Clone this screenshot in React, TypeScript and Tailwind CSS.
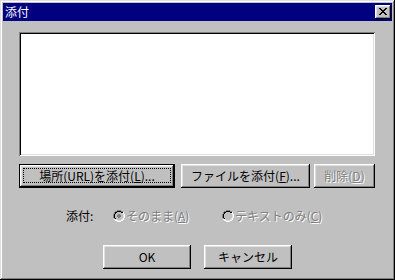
import React from 'react';

const FONT = '"Noto Sans CJK JP", "Noto Sans", sans-serif';

const COLORS: Record<string, string> = {
  G: '#808080',
  K: '#000000',
  L: '#dfdfdf',
  W: '#ffffff',
  F: '#c0c0c0',
  D: '#808080',
};

function Pixels({ rows, className }: { rows: string[]; className?: string }) {
  return (
    <svg
      width={rows[0].length}
      height={rows.length}
      viewBox={`0 0 ${rows[0].length} ${rows.length}`}
      shapeRendering="crispEdges"
      className={className}
    >
      {rows.flatMap((row, y) =>
        row.split('').map((c, x) =>
          COLORS[c] ? <rect key={`${x}-${y}`} x={x} y={y} width={1} height={1} fill={COLORS[c]} /> : null,
        ),
      )}
    </svg>
  );
}

const RADIO_OFF = [
  '....GGGG....',
  '..GGKKKKGG..',
  '.GKKFFFFKKW.',
  '.GKFFFFFFLW.',
  'GKFFFFFFFFLW',
  'GKFFFFFFFFLW',
  'GKFFFFFFFFLW',
  'GKFFFFFFFFLW',
  '.GKFFFFFFLW.',
  '.WLLFFFFLLW.',
  '..WWLLLLWW..',
  '....WWWW....',
];

const RADIO_ON = [
  '....GGGG....',
  '..GGKKKKGG..',
  '.GKKFFFFKKW.',
  '.GKFFFFFFLW.',
  'GKFFFDDFFFLW',
  'GKFFDDDDFFLW',
  'GKFFDDDDFFLW',
  'GKFFFDDFFFLW',
  '.GKFFFFFFLW.',
  '.WLLFFFFLLW.',
  '..WWLLLLWW..',
  '....WWWW....',
];

const CLOSE_X = [
  'KK....KK',
  '.KK..KK.',
  '..KKKK..',
  '...KK...',
  '..KKKK..',
  '.KK..KK.',
  'KK....KK',
];

const raised =
  'shadow-[inset_-1px_-1px_#000,inset_1px_1px_#fff,inset_-2px_-2px_#808080,inset_2px_2px_#dfdfdf]';
const raisedDefault =
  'shadow-[inset_0_0_0_1px_#000,inset_-2px_-2px_#000,inset_2px_2px_#fff,inset_-3px_-3px_#808080,inset_3px_3px_#dfdfdf]';
const disabledText = 'text-[#808080] [text-shadow:1px_1px_0_#fff]';

function Button({
  children,
  width,
  isDefault,
  focused,
  disabled,
}: {
  children: React.ReactNode;
  width: string;
  isDefault?: boolean;
  focused?: boolean;
  disabled?: boolean;
}) {
  return (
    <div
      className={`${width} h-[24px] bg-[#c0c0c0] ${isDefault ? raisedDefault : raised} relative flex items-center justify-center text-[12px] leading-[12px] ${disabled ? disabledText : 'text-black'}`}
    >
      {focused && <div className="absolute left-[4px] top-[4px] right-[4px] bottom-[5px] border border-dotted border-black" />}
      <span className="relative">{children}</span>
    </div>
  );
}

export default function App() {
  return (
    <div
      className="w-[395px] h-[280px] bg-[#c0c0c0] p-[3px] flex flex-col shadow-[inset_-1px_-1px_#000,inset_1px_1px_#dfdfdf,inset_-2px_-2px_#808080,inset_2px_2px_#fff]"
      style={{ fontFamily: FONT }}
    >
      <div className="h-[18px] bg-[#000080] flex items-center justify-between pl-[2px] pr-[1px]">
        <span className="text-white text-[12px] leading-[12px]">添付</span>
        <div className={`w-[16px] h-[14px] bg-[#c0c0c0] ${raised} flex items-start justify-start pl-[4px] pt-[3px]`}>
          <Pixels rows={CLOSE_X} />
        </div>
      </div>

      <div className="pl-[16px] flex flex-col">
        <div className="mt-[11px] w-[356px] h-[124px] bg-white shadow-[inset_1px_1px_#808080,inset_-1px_-1px_#fff,inset_2px_2px_#000,inset_-2px_-2px_#dfdfdf]" />

        <div className="mt-[8px] flex">
          <Button width="w-[156px]" isDefault focused>
            場所(URL)を添付(<u>L</u>)...
          </Button>
          <div className="ml-[6px]">
            <Button width="w-[129px]">
              ファイルを添付(<u>F</u>)...
            </Button>
          </div>
          <div className="ml-[4px]">
            <Button width="w-[61px]" disabled>
              削除(<u>D</u>)
            </Button>
          </div>
        </div>

        <div className="mt-[22px] h-[12px] flex items-center text-[12px] leading-[12px]">
          <span className="ml-[47px] w-[47px] text-black">添付:</span>
          <div className="w-[109px] flex items-center">
            <Pixels rows={RADIO_ON} />
            <span className={`ml-[1px] ${disabledText}`}>
              そのまま(<u>A</u>)
            </span>
          </div>
          <div className="flex items-center">
            <Pixels rows={RADIO_OFF} />
            <span className={`ml-[1px] ${disabledText}`}>
              テキストのみ(<u>C</u>)
            </span>
          </div>
        </div>

        <div className="mt-[23px] flex">
          <div className="ml-[84px]">
            <Button width="w-[88px]">OK</Button>
          </div>
          <div className="ml-[13px]">
            <Button width="w-[88px]">キャンセル</Button>
          </div>
        </div>
      </div>
    </div>
  );
}
